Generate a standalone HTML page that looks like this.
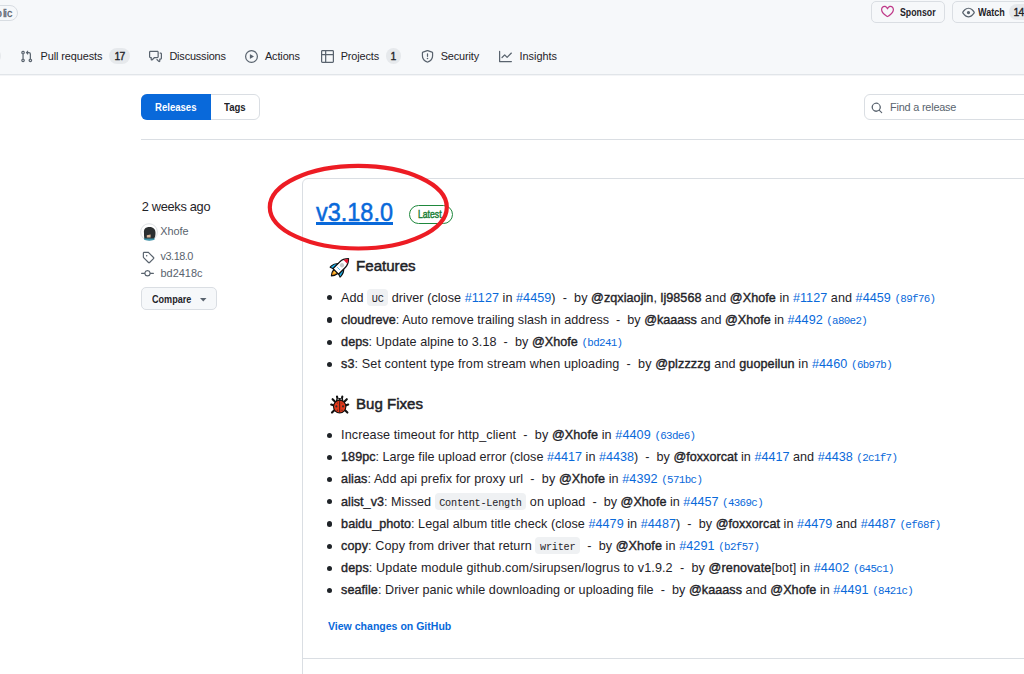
<!DOCTYPE html>
<html><head><meta charset="utf-8">
<style>
*{box-sizing:border-box;margin:0;padding:0}
html,body{width:1024px;height:674px;overflow:hidden;background:#fff;font-family:"Liberation Sans",sans-serif;color:#1f2328}
body{position:relative}
.a{position:absolute;white-space:nowrap}
.b{position:absolute}
b{font-weight:normal;-webkit-text-stroke:0.38px #1f2328}
.lk{color:#0969da}
.sha{font-family:"Liberation Mono",monospace;color:#0969da}
.code{font-family:"Liberation Mono",monospace;background:#eff1f3;border-radius:4px}
svg{position:absolute;overflow:visible}
</style></head><body>

<div class="b" style="left:0;top:0;width:1024px;height:74px;background:#f6f8fa"></div>
<div class="b" style="left:0;top:74px;width:1024px;height:1px;background:#e1e5e9"></div>
<div class="b" style="left:0;top:75px;width:1024px;height:1px;background:#f4f5f7"></div>
<div class="b" style="left:-22px;top:4.5px;width:39.5px;height:16px;border:1px solid #d8dde2;border-radius:8px"></div>
<div class="a" id="pub_b" style="left:-4.0px;top:8.43px;font-size:10.6px;line-height:10.6px;letter-spacing:0.000px;color:#59636e;-webkit-text-stroke:0.3px #59636e;">b</div>
<div class="a" id="pub_l" style="left:2.9px;top:8.43px;font-size:10.6px;line-height:10.6px;letter-spacing:0.000px;color:#59636e;-webkit-text-stroke:0.3px #59636e;">l</div>
<div class="a" id="pub_i" style="left:4.6px;top:8.43px;font-size:10.6px;line-height:10.6px;letter-spacing:0.000px;color:#59636e;-webkit-text-stroke:0.3px #59636e;">i</div>
<div class="a" id="pub_c" style="left:7.1px;top:8.43px;font-size:10.6px;line-height:10.6px;letter-spacing:0.000px;color:#59636e;-webkit-text-stroke:0.3px #59636e;">c</div>
<div class="b" style="left:-16px;top:48px;width:17px;height:16px;border-radius:8px;background:#e6e9ec"></div>
<div class="a" id="nav1" style="left:40.6px;top:51.12px;font-size:10.9px;line-height:10.9px;letter-spacing:-0.100px;color:#1f2328;">Pull requests</div>
<div class="a" id="nav2" style="left:169.4px;top:51.12px;font-size:10.9px;line-height:10.9px;letter-spacing:-0.160px;color:#1f2328;">Discussions</div>
<div class="a" id="nav3" style="left:264.9px;top:51.12px;font-size:10.9px;line-height:10.9px;letter-spacing:-0.100px;color:#1f2328;">Actions</div>
<div class="a" id="nav4" style="left:340.75px;top:51.12px;font-size:10.9px;line-height:10.9px;letter-spacing:-0.143px;color:#1f2328;">Projects</div>
<div class="a" id="nav5" style="left:440.75px;top:51.12px;font-size:10.9px;line-height:10.9px;letter-spacing:-0.143px;color:#1f2328;">Security</div>
<div class="a" id="nav6" style="left:519.5px;top:51.12px;font-size:10.9px;line-height:10.9px;letter-spacing:0.000px;color:#1f2328;">Insights</div>
<div class="b" style="left:109.4px;top:48px;width:20.6px;height:15.6px;border-radius:8px;background:#e6e9ec"></div>
<div class="a" id="c17a" style="left:114.5px;top:52.00px;font-size:10.4px;line-height:10.4px;letter-spacing:0.000px;color:#1f2328;-webkit-text-stroke:0.35px #1f2328;">1</div>
<div class="a" id="c17b" style="left:119.4px;top:52.00px;font-size:10.4px;line-height:10.4px;letter-spacing:0.000px;color:#1f2328;-webkit-text-stroke:0.35px #1f2328;">7</div>
<div class="b" style="left:386px;top:48px;width:15.4px;height:15.6px;border-radius:8px;background:#e6e9ec"></div>
<div class="a" id="c1" style="left:390.4px;top:52.00px;font-size:10.4px;line-height:10.4px;letter-spacing:0.000px;color:#1f2328;-webkit-text-stroke:0.35px #1f2328;">1</div>
<svg style="left:20px;top:50px" width="13" height="13" viewBox="0 0 16 16"><path fill="#59636e" d="M1.5 3.25a2.25 2.25 0 1 1 3 2.122v5.256a2.251 2.251 0 1 1-1.5 0V5.372A2.25 2.25 0 0 1 1.5 3.25Zm5.677-.177L9.573.677A.25.25 0 0 1 10 .854V2.5h1A2.5 2.5 0 0 1 13.5 5v5.628a2.251 2.251 0 1 1-1.5 0V5a1 1 0 0 0-1-1h-1v1.646a.25.25 0 0 1-.427.177L7.177 3.427a.25.25 0 0 1 0-.354ZM3.75 2.5a.75.75 0 1 0 0 1.5.75.75 0 0 0 0-1.5Zm0 9.5a.75.75 0 1 0 0 1.5.75.75 0 0 0 0-1.5Zm8.25.75a.75.75 0 1 0 1.5 0 .75.75 0 0 0-1.5 0Z"/></svg>
<svg style="left:149px;top:50px" width="13" height="13" viewBox="0 0 16 16"><path fill="#59636e" d="M1.75 1h8.5c.966 0 1.75.784 1.75 1.75v5.5A1.75 1.75 0 0 1 10.25 10H7.061l-2.574 2.573A1.458 1.458 0 0 1 2 11.543V10h-.25A1.75 1.75 0 0 1 0 8.25v-5.5C0 1.784.784 1 1.75 1ZM1.5 2.75v5.5c0 .138.112.25.25.25h1a.75.75 0 0 1 .75.75v2.19l2.72-2.72a.749.749 0 0 1 .53-.22h3.5a.25.25 0 0 0 .25-.25v-5.5a.25.25 0 0 0-.25-.25h-8.5a.25.25 0 0 0-.25.25Zm13 2a.25.25 0 0 0-.25-.25h-.5a.75.75 0 0 1 0-1.5h.5c.966 0 1.75.784 1.75 1.75v5.5A1.75 1.75 0 0 1 14.25 12H14v1.543a1.458 1.458 0 0 1-2.487 1.03L9.22 12.28a.749.749 0 0 1 .326-1.275.749.749 0 0 1 .734.215l2.22 2.22v-2.19a.75.75 0 0 1 .75-.75h1a.25.25 0 0 0 .25-.25Z"/></svg>
<svg style="left:244.5px;top:50px" width="13" height="13" viewBox="0 0 16 16"><path fill="#59636e" d="M8 0a8 8 0 1 1 0 16A8 8 0 0 1 8 0ZM1.5 8a6.5 6.5 0 1 0 13 0 6.5 6.5 0 0 0-13 0Zm4.879-2.773 4.264 2.559a.25.25 0 0 1 0 .428l-4.264 2.559A.25.25 0 0 1 6 10.559V5.442a.25.25 0 0 1 .379-.215Z"/></svg>
<svg style="left:320.5px;top:50px" width="13" height="13" viewBox="0 0 16 16"><path fill="#59636e" d="M0 1.75C0 .784.784 0 1.75 0h12.5C15.216 0 16 .784 16 1.75v12.5A1.75 1.75 0 0 1 14.25 16H1.75A1.75 1.75 0 0 1 0 14.25ZM6.5 6.5v8h7.75a.25.25 0 0 0 .25-.25V6.5Zm8-1.5V1.75a.25.25 0 0 0-.25-.25H6.5V5Zm-13 1.5v7.75c0 .138.112.25.25.25H5v-8ZM5 5V1.5H1.75a.25.25 0 0 0-.25.25V5Z"/></svg>
<svg style="left:420.5px;top:50px" width="13" height="13" viewBox="0 0 16 16"><path fill="#59636e" d="M7.467.133a1.748 1.748 0 0 1 1.066 0l5.25 1.68A1.75 1.75 0 0 1 15 3.48V7c0 1.566-.32 3.182-1.303 4.682-.983 1.498-2.585 2.813-5.032 3.855a1.697 1.697 0 0 1-1.33 0c-2.447-1.042-4.049-2.357-5.032-3.855C1.32 10.182 1 8.566 1 7V3.48a1.755 1.755 0 0 1 1.217-1.667Zm.61 1.429a.25.25 0 0 0-.153 0l-5.25 1.68a.25.25 0 0 0-.174.238V7c0 1.358.275 2.666 1.057 3.86.784 1.194 2.121 2.34 4.366 3.297a.196.196 0 0 0 .154 0c2.245-.956 3.582-2.104 4.366-3.298C13.225 9.666 13.5 8.36 13.5 7V3.48a.251.251 0 0 0-.174-.237l-5.25-1.68ZM8.75 4.75v3a.75.75 0 0 1-1.5 0v-3a.75.75 0 0 1 1.5 0ZM9 10.5a1 1 0 1 1-2 0 1 1 0 0 1 2 0Z"/></svg>
<svg style="left:499px;top:50px" width="13" height="13" viewBox="0 0 16 16"><path fill="#59636e" d="M1.5 1.75V13.5h13.75a.75.75 0 0 1 0 1.5H.75a.75.75 0 0 1-.75-.75V1.75a.75.75 0 0 1 1.5 0Zm14.28 2.53-5.25 5.25a.75.75 0 0 1-1.06 0L7 7.06 4.28 9.78a.751.751 0 0 1-1.042-.018.751.751 0 0 1-.018-1.042l3.25-3.25a.75.75 0 0 1 1.06 0L10 7.94l4.72-4.72a.751.751 0 0 1 1.042.018.751.751 0 0 1 .018 1.042Z"/></svg>
<div class="b" style="left:871px;top:1px;width:74px;height:22px;border:1px solid #dadee3;border-radius:5px;background:#f6f8fa"></div>
<svg style="left:880.5px;top:5px" width="13" height="13" viewBox="0 0 16 16"><path fill="#bf3989" d="m8 14.25.345.666a.75.75 0 0 1-.69 0l-.008-.004-.018-.01a7.152 7.152 0 0 1-.31-.17 22.055 22.055 0 0 1-3.434-2.414C2.045 10.731 0 8.35 0 5.5 0 2.836 2.086 1 4.25 1 5.797 1 7.153 1.802 8 3.02 8.847 1.802 10.203 1 11.75 1 13.914 1 16 2.836 16 5.5c0 2.85-2.045 5.231-3.885 6.818a22.066 22.066 0 0 1-3.744 2.584l-.018.01-.006.003h-.002ZM4.25 2.5c-1.336 0-2.75 1.164-2.75 3 0 2.15 1.58 4.144 3.365 5.682A20.58 20.58 0 0 0 8 13.393a20.58 20.58 0 0 0 3.135-2.211C12.92 9.644 14.5 7.65 14.5 5.5c0-1.836-1.414-3-2.75-3-1.373 0-2.609.986-3.029 2.456a.749.749 0 0 1-1.442 0C6.859 3.486 5.623 2.5 4.25 2.5Z"/></svg>
<div class="a" id="spons" style="left:899.5px;top:7.57px;font-size:10.2px;line-height:10.2px;transform:scaleX(0.8604);transform-origin:0 0;font-weight:bold;color:#1f2328;">Sponsor</div>
<div class="b" style="left:952px;top:1px;width:90px;height:22px;border:1px solid #dadee3;border-radius:5px;background:#f6f8fa"></div>
<svg style="left:962px;top:5.5px" width="13" height="13" viewBox="0 0 16 16"><path fill="#59636e" d="M8 2c1.981 0 3.671.992 4.933 2.078 1.27 1.091 2.187 2.345 2.637 3.023a1.62 1.62 0 0 1 0 1.798c-.45.678-1.367 1.932-2.637 3.023C11.67 13.008 9.981 14 8 14c-1.981 0-3.671-.992-4.933-2.078C1.797 10.83.88 9.576.43 8.898a1.62 1.62 0 0 1 0-1.798c.45-.677 1.367-1.931 2.637-3.022C4.33 2.992 6.019 2 8 2ZM1.679 7.932a.12.12 0 0 0 0 .136c.411.622 1.241 1.75 2.366 2.717C5.176 11.758 6.527 12.5 8 12.5c1.473 0 2.825-.742 3.955-1.715 1.124-.967 1.954-2.096 2.366-2.717a.12.12 0 0 0 0-.136c-.412-.621-1.242-1.75-2.366-2.717C10.824 4.242 9.473 3.5 8 3.5c-1.473 0-2.825.742-3.955 1.715-1.124.967-1.954 2.096-2.366 2.717ZM8 10a2 2 0 1 1-.001-3.999A2 2 0 0 1 8 10Z"/></svg>
<div class="a" id="watch" style="left:977.7px;top:7.57px;font-size:10.2px;line-height:10.2px;transform:scaleX(0.8871);transform-origin:0 0;font-weight:bold;color:#1f2328;">Watch</div>
<div class="b" style="left:1009.3px;top:4px;width:30px;height:15.6px;border-radius:8px;background:#e6e9ec"></div>
<div class="a" id="c14a" style="left:1013.4px;top:8.00px;font-size:10.4px;line-height:10.4px;letter-spacing:0.000px;color:#1f2328;-webkit-text-stroke:0.35px #1f2328;">1</div>
<div class="a" id="c14b" style="left:1018.6px;top:8.00px;font-size:10.4px;line-height:10.4px;letter-spacing:0.000px;color:#1f2328;-webkit-text-stroke:0.35px #1f2328;">4</div>
<div class="b" style="left:141px;top:94.4px;width:118.5px;height:25.6px;border:1px solid #dadee3;border-radius:6px;background:#fff"></div>
<div class="b" style="left:141px;top:94.4px;width:70px;height:25.6px;border-radius:6px 0 0 6px;background:#0969da"></div>
<div class="a" id="rel" style="left:155.4px;top:101.97px;font-size:10.9px;line-height:10.9px;transform:scaleX(0.8784);transform-origin:0 0;font-weight:bold;color:#fff;">Releases</div>
<div class="a" id="tags" style="left:224px;top:101.97px;font-size:10.9px;line-height:10.9px;transform:scaleX(0.8800);transform-origin:0 0;font-weight:bold;color:#1f2328;">Tags</div>
<div class="b" style="left:864px;top:94.4px;width:200px;height:25.4px;border:1px solid #dadee3;border-radius:6px;background:#fff"></div>
<svg style="left:870.5px;top:101.5px" width="12" height="12" viewBox="0 0 16 16"><path fill="#59636e" d="M10.68 11.74a6 6 0 0 1-7.922-8.982 6 6 0 0 1 8.982 7.922l3.04 3.04a.749.749 0 0 1-.326 1.275.749.749 0 0 1-.734-.215ZM11.5 7a4.499 4.499 0 1 0-8.997 0A4.499 4.499 0 0 0 11.5 7Z"/></svg>
<div class="a" id="find" style="left:890px;top:101.97px;font-size:10.9px;line-height:10.9px;letter-spacing:-0.200px;color:#59636e;">Find a release</div>
<div class="b" style="left:141px;top:139px;width:900px;height:1px;background:#dadee3"></div>
<div class="a" id="when" style="left:141.7px;top:201.06px;font-size:12.8px;line-height:12.8px;letter-spacing:-0.300px;color:#1f2328;">2 weeks ago</div>
<svg style="left:138px;top:222px" width="22" height="20" viewBox="0 0 22 20">
<circle cx="11" cy="10.1" r="8.4" fill="#fff" stroke="#dfe2e5" stroke-width="1"/>
<path d="M6 17.5 C6 15 7 15 11 15 C15 15 16.7 15.5 16.7 17.6 C14.5 19 8 19 6 17.5Z" fill="#3d95ac"/>
<path d="M6 11 C5.5 7 7.5 5 11.5 5 C15.5 5 17.5 7.5 17.5 11 C17.5 14 16.8 16 16 16.5 L6.5 16.5 C6 15 6 13 6 11Z" fill="#2b2f31"/>
<path d="M8.8 13.2 L12.6 12.4 L12.6 15.4 L8.8 15.4 Z" fill="#dcb89c"/>
</svg>
<div class="a" id="auth" style="left:160.2px;top:225.87px;font-size:10.9px;line-height:10.9px;letter-spacing:0.000px;color:#59636e;">Xhofe</div>
<svg style="left:141.5px;top:250.5px" width="12.5" height="12.5" viewBox="0 0 16 16"><path fill="#59636e" d="M1 7.775V2.75C1 1.784 1.784 1 2.75 1h5.025c.464 0 .91.184 1.238.513l6.25 6.25a1.75 1.75 0 0 1 0 2.474l-5.026 5.026a1.75 1.75 0 0 1-2.474 0l-6.25-6.25A1.752 1.752 0 0 1 1 7.775Zm1.5 0c0 .066.026.13.073.177l6.25 6.25a.25.25 0 0 0 .354 0l5.025-5.025a.25.25 0 0 0 0-.354l-6.25-6.25a.25.25 0 0 0-.177-.073H2.75a.25.25 0 0 0-.25.25ZM6 5a1 1 0 1 1 0 2 1 1 0 0 1 0-2Z"/></svg>
<div class="a" id="tagv" style="left:160.5px;top:250.57px;font-size:10.9px;line-height:10.9px;letter-spacing:-0.467px;color:#59636e;">v3.18.0</div>
<svg style="left:141px;top:267px" width="13" height="13" viewBox="0 0 16 16"><path fill="#59636e" d="M11.93 8.5a4.002 4.002 0 0 1-7.86 0H.75a.75.75 0 0 1 0-1.5h3.32a4.002 4.002 0 0 1 7.86 0h3.32a.75.75 0 0 1 0 1.5Zm-1.43-.75a2.5 2.5 0 1 0-5 0 2.5 2.5 0 0 0 5 0Z"/></svg>
<div class="a" id="sha" style="left:160.5px;top:267.87px;font-size:10.9px;line-height:10.9px;letter-spacing:0.033px;color:#59636e;">bd2418c</div>
<div class="b" style="left:141px;top:287.2px;width:75.7px;height:22.6px;border:1px solid #dadee3;border-radius:5px;background:#f6f8fa"></div>
<div class="a" id="cmp" style="left:151.8px;top:294.57px;font-size:10.2px;line-height:10.2px;transform:scaleX(0.8914);transform-origin:0 0;font-weight:bold;color:#1f2328;">Compare</div>
<svg style="left:200px;top:297.5px" width="6.5" height="4" viewBox="0 0 6.5 4"><path fill="#59636e" d="M0 0h6.5L3.25 3.6Z"/></svg>
<div class="b" style="left:302px;top:178px;width:800px;height:600px;border:1px solid #dadee3;border-radius:6px"></div>
<div class="b" style="left:303px;top:658px;width:800px;height:1px;background:#dadee3"></div>
<div class="a" id="title" style="left:316px;top:199.83px;font-size:25.6px;line-height:25.6px;transform:scaleX(0.9167);transform-origin:0 0;color:#0969da;-webkit-text-stroke:0.5px #0969da;">v3.18.0</div>
<div class="b" style="left:316px;top:222.2px;width:77px;height:2.4px;background:#0969da"></div>
<div class="b" style="left:409px;top:204.5px;width:43.6px;height:19.2px;border:1px solid #1f883d;border-radius:10px"></div>
<div class="a" id="latest" style="left:418.4px;top:210.37px;font-size:10.2px;line-height:10.2px;transform:scaleX(0.8488);transform-origin:0 0;color:#1a7f37;-webkit-text-stroke:0.45px #1a7f37;">Latest</div>
<svg style="left:327px;top:256px" width="24" height="24" viewBox="0 0 24 24">
<g transform="rotate(45 12.6 11.6) translate(12.6 11.6)" stroke-linejoin="round">
<path d="M-2.9 5 L2.9 5 C2.6 8 1.5 10 0 11.6 C-1.5 10 -2.6 8 -2.9 5 Z" fill="#f4900c" stroke="#111" stroke-width="1.2"/><path d="M-1.5 5.5 L1.5 5.5 L0 9 Z" fill="#ffcc4d"/>
<path d="M-3.6 -2.2 C-5.5 -0.5 -7 2 -7 4.6 L-7 6.4 L-3.6 5.2 Z" fill="#1fb5f0" stroke="#111" stroke-width="1.1"/>
<path d="M3.6 -2.2 C5.5 -0.5 7 2 7 4.6 L7 6.4 L3.6 5.2 Z" fill="#1fb5f0" stroke="#111" stroke-width="1.1"/>
<path d="M-3.9 5.4 L-3.9 -4.5 C-3.9 -8 -2 -10.5 0 -12.6 C2 -10.5 3.9 -8 3.9 -4.5 L3.9 5.4 Z" fill="#fff" stroke="#111" stroke-width="1.3"/>
<path d="M-2.6 -8.2 C-1.8 -10 -1 -11.3 0 -12.1 C1 -11.3 1.8 -10 2.6 -8.2 Z" fill="#e8112d"/>
<circle cx="0" cy="-3.4" r="2.1" fill="#c8c8c8"/>
<path d="M-1.9 1.4 H1.9" stroke="#4ab9f0" stroke-width="0.9"/>
</g>
</svg>
<svg style="left:327px;top:393px" width="24" height="24" viewBox="0 0 24 24">
<g stroke="#111" stroke-width="2.1" stroke-linecap="round" stroke-linejoin="round" fill="none">
<path d="M10 3.6 L10.6 6.2 M15.3 3.6 L14.8 6.2"/>
<path d="M5.6 6.2 L8.4 9 M19.8 6.2 L17 9"/>
<path d="M4.2 11.6 L7 12.6 M21.2 11.6 L18.4 12.6"/>
<path d="M5 19.6 L7.6 17 M20.4 19.6 L17.8 17"/>
</g>
<path d="M9.6 7.8 C9.6 5 15.8 5 15.8 7.8 Z" fill="#222" stroke="#111" stroke-width="1.2"/>
<circle cx="11.2" cy="6.4" r="0.8" fill="#999"/><circle cx="14.2" cy="6.4" r="0.8" fill="#999"/>
<ellipse cx="12.7" cy="13.6" rx="6.2" ry="6.4" fill="#e5391c" stroke="#111" stroke-width="1.1"/>
<path d="M12.7 7.6 V19.8" stroke="#3a1d18" stroke-width="1"/>
<circle cx="9.4" cy="13.4" r="1.05" fill="#3a2a28"/><circle cx="16" cy="13.4" r="1.05" fill="#3a2a28"/>
<circle cx="10.4" cy="17.2" r="0.7" fill="#5a2a22"/><circle cx="15" cy="17.2" r="0.7" fill="#5a2a22"/>
<circle cx="10.4" cy="10" r="0.6" fill="#5a2a22"/><circle cx="14.9" cy="10" r="0.6" fill="#5a2a22"/>
</svg>
<div class="a" id="feat" style="left:355.7px;top:258.48px;font-size:15.5px;line-height:15.5px;transform:scaleX(0.9744);transform-origin:0 0;color:#1f2328;-webkit-text-stroke:0.5px #1f2328;">Features</div>
<div class="a" id="bugs" style="left:356.2px;top:395.88px;font-size:15.5px;line-height:15.5px;transform:scaleX(0.9708);transform-origin:0 0;color:#1f2328;-webkit-text-stroke:0.5px #1f2328;">Bug Fixes</div>
<div class="b" style="left:327px;top:295.30px;width:5.2px;height:5.2px;border-radius:50%;background:#1f2328"></div>
<div class="a" id="li0" style="left:341.1px;top:291.63px;font-size:12.6px;line-height:12.6px;letter-spacing:0.056px;color:#1f2328;">Add <span class="code" style="font-size:10.2px;padding:4.6px 4.6px 1.3px;letter-spacing:-0.22px">UC</span> driver (close <span class="lk">#1127</span> in <span class="lk">#4459</span>)&nbsp; -&nbsp; by <b>@zqxiaojin</b>, <b>lj98568</b> and <b>@Xhofe</b> in <span class="lk">#1127</span> and <span class="lk">#4459</span> <span class="sha" style="font-size:10.8px;letter-spacing:-0.62px">(89f76)</span></div>
<div class="b" style="left:327px;top:317.47px;width:5.2px;height:5.2px;border-radius:50%;background:#1f2328"></div>
<div class="a" id="li1" style="left:341.1px;top:313.80px;font-size:12.6px;line-height:12.6px;letter-spacing:0.011px;color:#1f2328;"><b>cloudreve</b>: Auto remove trailing slash in address&nbsp; -&nbsp; by <b>@kaaass</b> and <b>@Xhofe</b> in <span class="lk">#4492</span> <span class="sha" style="font-size:10.8px;letter-spacing:-0.62px">(a80e2)</span></div>
<div class="b" style="left:327px;top:339.64px;width:5.2px;height:5.2px;border-radius:50%;background:#1f2328"></div>
<div class="a" id="li2" style="left:341.1px;top:335.97px;font-size:12.6px;line-height:12.6px;letter-spacing:0.050px;color:#1f2328;"><b>deps</b>: Update alpine to 3.18&nbsp; -&nbsp; by <b>@Xhofe</b> <span class="sha" style="font-size:10.8px;letter-spacing:-0.62px">(bd241)</span></div>
<div class="b" style="left:327px;top:361.81px;width:5.2px;height:5.2px;border-radius:50%;background:#1f2328"></div>
<div class="a" id="li3" style="left:341.1px;top:358.14px;font-size:12.6px;line-height:12.6px;letter-spacing:0.097px;color:#1f2328;"><b>s3</b>: Set content type from stream when uploading&nbsp; -&nbsp; by <b>@plzzzzg</b> and <b>guopeilun</b> in <span class="lk">#4460</span> <span class="sha" style="font-size:10.8px;letter-spacing:-0.62px">(6b97b)</span></div>
<div class="b" style="left:327px;top:432.60px;width:5.2px;height:5.2px;border-radius:50%;background:#1f2328"></div>
<div class="a" id="li4" style="left:341.1px;top:428.93px;font-size:12.6px;line-height:12.6px;letter-spacing:0.090px;color:#1f2328;">Increase timeout for http_client&nbsp; -&nbsp; by <b>@Xhofe</b> in <span class="lk">#4409</span> <span class="sha" style="font-size:10.8px;letter-spacing:-0.62px">(63de6)</span></div>
<div class="b" style="left:327px;top:454.81px;width:5.2px;height:5.2px;border-radius:50%;background:#1f2328"></div>
<div class="a" id="li5" style="left:341.1px;top:451.14px;font-size:12.6px;line-height:12.6px;letter-spacing:0.019px;color:#1f2328;"><b>189pc</b>: Large file upload error (close <span class="lk">#4417</span> in <span class="lk">#4438</span>)&nbsp; -&nbsp; by <b>@foxxorcat</b> in <span class="lk">#4417</span> and <span class="lk">#4438</span> <span class="sha" style="font-size:10.8px;letter-spacing:-0.62px">(2c1f7)</span></div>
<div class="b" style="left:327px;top:477.02px;width:5.2px;height:5.2px;border-radius:50%;background:#1f2328"></div>
<div class="a" id="li6" style="left:341.1px;top:473.35px;font-size:12.6px;line-height:12.6px;letter-spacing:0.083px;color:#1f2328;"><b>alias</b>: Add api prefix for proxy url&nbsp; -&nbsp; by <b>@Xhofe</b> in <span class="lk">#4392</span> <span class="sha" style="font-size:10.8px;letter-spacing:-0.62px">(571bc)</span></div>
<div class="b" style="left:327px;top:499.23px;width:5.2px;height:5.2px;border-radius:50%;background:#1f2328"></div>
<div class="a" id="li7" style="left:341.1px;top:495.56px;font-size:12.6px;line-height:12.6px;letter-spacing:0.025px;color:#1f2328;"><b>alist_v3</b>: Missed <span class="code" style="font-size:10.2px;padding:4.6px 4.6px 1.3px;letter-spacing:-0.22px">Content-Length</span> on upload&nbsp; -&nbsp; by <b>@Xhofe</b> in <span class="lk">#4457</span> <span class="sha" style="font-size:10.8px;letter-spacing:-0.62px">(4369c)</span></div>
<div class="b" style="left:327px;top:521.44px;width:5.2px;height:5.2px;border-radius:50%;background:#1f2328"></div>
<div class="a" id="li8" style="left:341.1px;top:517.77px;font-size:12.6px;line-height:12.6px;letter-spacing:0.052px;color:#1f2328;"><b>baidu_photo</b>: Legal album title check (close <span class="lk">#4479</span> in <span class="lk">#4487</span>)&nbsp; -&nbsp; by <b>@foxxorcat</b> in <span class="lk">#4479</span> and <span class="lk">#4487</span> <span class="sha" style="font-size:10.8px;letter-spacing:-0.62px">(ef68f)</span></div>
<div class="b" style="left:327px;top:543.65px;width:5.2px;height:5.2px;border-radius:50%;background:#1f2328"></div>
<div class="a" id="li9" style="left:341.1px;top:539.98px;font-size:12.6px;line-height:12.6px;letter-spacing:0.093px;color:#1f2328;"><b>copy</b>: Copy from driver that return <span class="code" style="font-size:10.2px;padding:4.6px 4.6px 1.3px;letter-spacing:-0.22px">writer</span>&nbsp; -&nbsp; by <b>@Xhofe</b> in <span class="lk">#4291</span> <span class="sha" style="font-size:10.8px;letter-spacing:-0.62px">(b2f57)</span></div>
<div class="b" style="left:327px;top:565.86px;width:5.2px;height:5.2px;border-radius:50%;background:#1f2328"></div>
<div class="a" id="li10" style="left:341.1px;top:562.19px;font-size:12.6px;line-height:12.6px;letter-spacing:0.109px;color:#1f2328;"><b>deps</b>: Update module github.com/sirupsen/logrus to v1.9.2&nbsp; -&nbsp; by <b>@renovate</b>[bot] in <span class="lk">#4402</span> <span class="sha" style="font-size:10.8px;letter-spacing:-0.62px">(645c1)</span></div>
<div class="b" style="left:327px;top:588.07px;width:5.2px;height:5.2px;border-radius:50%;background:#1f2328"></div>
<div class="a" id="li11" style="left:341.1px;top:584.40px;font-size:12.6px;line-height:12.6px;letter-spacing:0.053px;color:#1f2328;"><b>seafile</b>: Driver panic while downloading or uploading file&nbsp; -&nbsp; by <b>@kaaass</b> and <b>@Xhofe</b> in <span class="lk">#4491</span> <span class="sha" style="font-size:10.8px;letter-spacing:-0.62px">(8421c)</span></div>
<div class="a" id="view" style="left:328.4px;top:621.37px;font-size:10.9px;line-height:10.9px;transform:scaleX(0.9669);transform-origin:0 0;font-weight:bold;color:#0969da;">View changes on GitHub</div>
<svg style="left:0;top:0" width="1024" height="674"><ellipse cx="358.3" cy="207.2" rx="88.5" ry="41.3" fill="none" stroke="#ed1c24" stroke-width="4.2"/></svg>
</body></html>
